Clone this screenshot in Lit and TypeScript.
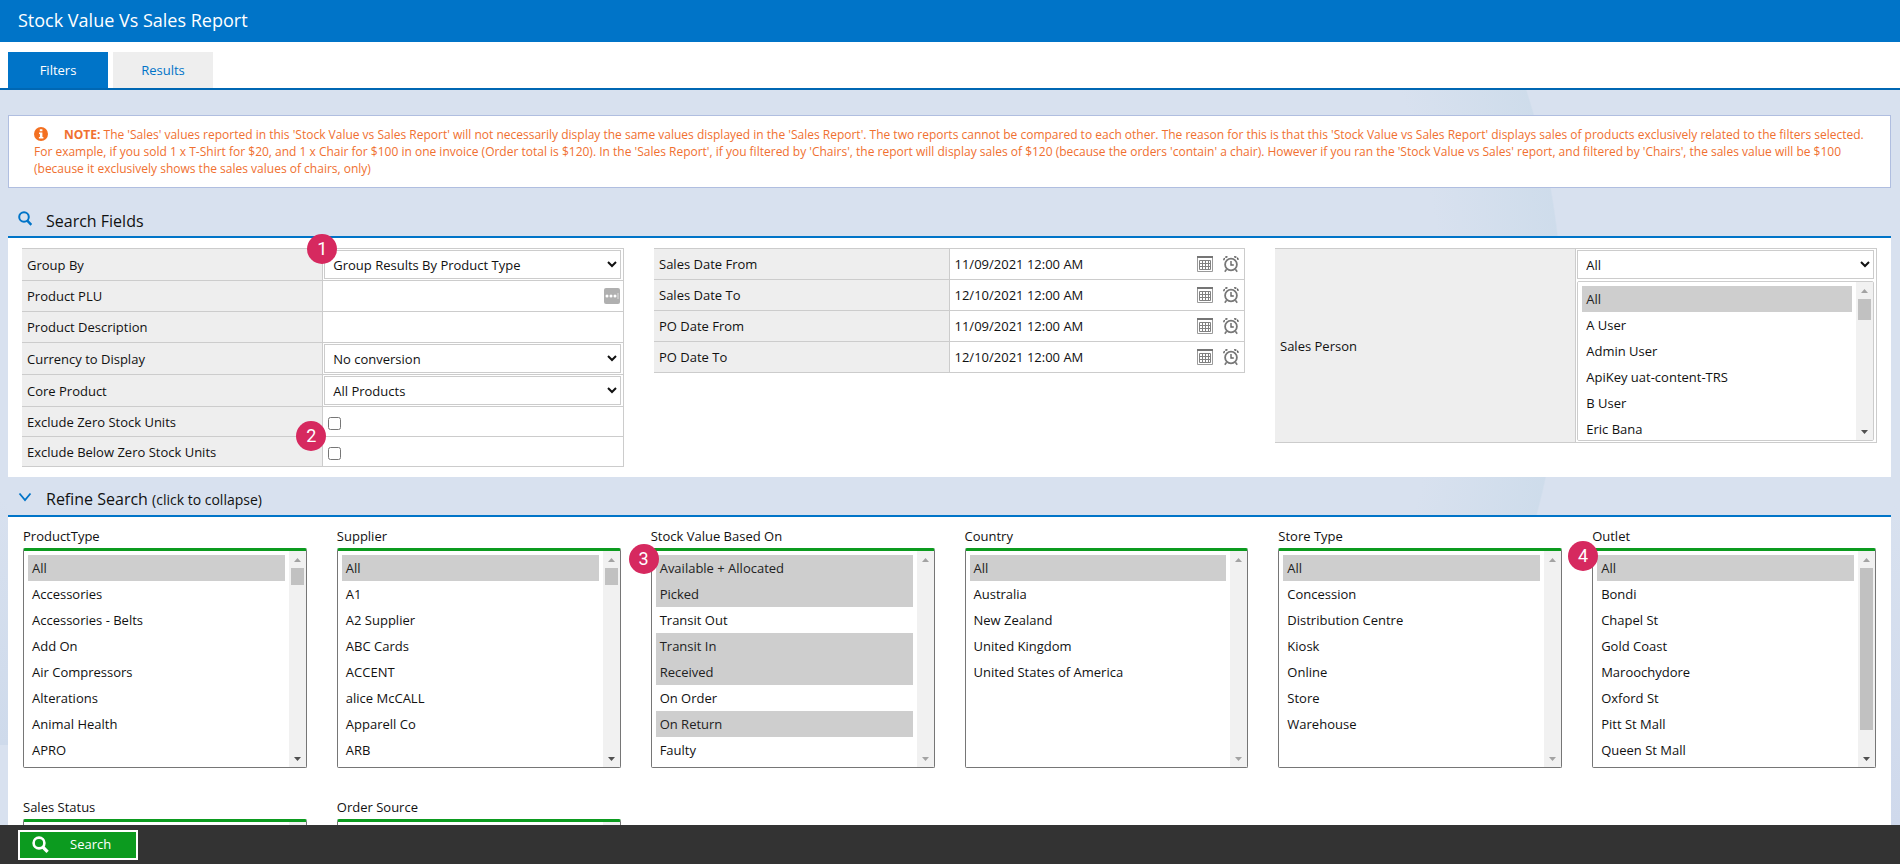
import { LitElement, html, css, svg } from "lit";
import { customElement, property } from "lit/decorators.js";

interface ListSpec {
  label: string;
  items: string[];
  selected?: number[];
  thumb?: number;
  badge?: string;
}

const LISTS: ListSpec[] = [
  { label: "ProductType", items: ["All", "Accessories", "Accessories - Belts", "Add On", "Air Compressors", "Alterations", "Animal Health", "APRO"], selected: [0], thumb: 17 },
  { label: "Supplier", items: ["All", "A1", "A2 Supplier", "ABC Cards", "ACCENT", "alice McCALL", "Apparell Co", "ARB"], selected: [0], thumb: 17 },
  { label: "Stock Value Based On", items: ["Available + Allocated", "Picked", "Transit Out", "Transit In", "Received", "On Order", "On Return", "Faulty"], selected: [0, 1, 3, 4, 6], badge: "3" },
  { label: "Country", items: ["All", "Australia", "New Zealand", "United Kingdom", "United States of America"], selected: [0] },
  { label: "Store Type", items: ["All", "Concession", "Distribution Centre", "Kiosk", "Online", "Store", "Warehouse"], selected: [0] },
  { label: "Outlet", items: ["All", "Bondi", "Chapel St", "Gold Coast", "Maroochydore", "Oxford St", "Pitt St Mall", "Queen St Mall"], selected: [0], thumb: 162, badge: "4" },
  { label: "Sales Status", items: [] },
  { label: "Order Source", items: [] },
];

const DATES: [string, string][] = [
  ["Sales Date From", "11/09/2021 12:00 AM"],
  ["Sales Date To", "12/10/2021 12:00 AM"],
  ["PO Date From", "11/09/2021 12:00 AM"],
  ["PO Date To", "12/10/2021 12:00 AM"],
];

const calendarIcon = svg`<svg width="16" height="16" viewBox="0 0 16 16" aria-hidden="true">
  <path d="M.5 1.500h15v14H.5z" fill="#fff" stroke="#9a9a9a"/>
  <path d="M0 0h16v2H0z" fill="#757575"/>
  <path d="M2.500 4.500h11v9h-11zM2.500 7.500h11M2.500 10.500h11M5.500 4.500v9M8.500 4.500v9M11.500 4.500v9" fill="none" stroke="#808080"/>
</svg>`;

const clockIcon = svg`<svg width="16" height="17" viewBox="0 0 16 17" aria-hidden="true">
  <circle cx="8" cy="8.500" r="5.900" fill="#fff" stroke="#777" stroke-width="1.800"/>
  <path d="M8 5v4h2.800" fill="none" stroke="#666" stroke-width="1.400"/>
  <path d="M.8 4.200C1 2 2.500.8 4.800.8M11.200.8C13.500.8 15 2 15.200 4.200" fill="none" stroke="#555" stroke-width="1.400" stroke-dasharray="2.200 1"/>
  <path d="M3.600 13.200l-1.800 2.600M12.400 13.200l1.800 2.600" stroke="#777" stroke-width="1.600"/>
</svg>`;

@customElement("filter-list")
export class FilterList extends LitElement {
  @property({ type: String }) label = "";
  @property({ attribute: false }) items: string[] = [];
  @property({ attribute: false }) selected: number[] = [];
  @property({ type: Number }) thumb = 0;
  @property({ type: Boolean, reflect: true }) plain = false;

  static styles = css`
    :host { display: block; font: 13px/18px "Open Sans", sans-serif; color: #111; }
    .caption { display: block; padding-bottom: 3px; }
    .box { display: flex; height: 220px; box-sizing: border-box; border: 1px solid #767676; border-top: 3px solid #0c9b1f; border-radius: 2px; background: #fff; overflow: hidden; }
    .list { flex: 1; min-width: 0; margin: 0; border: 0; padding: 4px; outline: 0; background: #fff; font: inherit; color: inherit; overflow-y: scroll; scrollbar-width: none; height: auto; border-radius: 0; }
    .list option { box-sizing: border-box; height: 26px; padding: 4px; }
    .list option:checked { background: linear-gradient(#cecece, #cecece); color: #222; }
    .bar { width: 17px; flex: none; display: flex; flex-direction: column; align-items: center; background: #f1f1f1; }
    .end { height: 17px; display: flex; align-items: center; }
    .track { flex: 1; }
    .thumb { width: 13px; background: #c1c1c1; }
    .arrow { fill: #a3a3a3; display: block; }
    .arrow.live { fill: #505050; }
    :host([plain]) .box { height: 160px; border: 1px solid #ccc; }
    :host([plain]) .caption { display: none; }
  `;

  render() {
    return html`
      <label class="caption" for="list">${this.label}</label>
      <div class="box">
        <select id="list" class="list" multiple size="4" aria-label=${this.label}>
          ${this.items.map((t, i) => html`<option ?selected=${this.selected.includes(i)}>${t}</option>`)}
        </select>
        <div class="bar" aria-hidden="true">
          <div class="end"><svg class="arrow" width="7" height="4"><path d="M3.500 0L7 4H0z" /></svg></div>
          <div class="track">${this.thumb ? html`<div class="thumb" style="height:${this.thumb}px"></div>` : null}</div>
          <div class="end"><svg class="arrow ${this.thumb ? "live" : ""}" width="7" height="4"><path d="M0 0h7L3.500 4z" /></svg></div>
        </div>
      </div>`;
  }
}

@customElement("app-root")
export class AppRoot extends LitElement {
  static styles = css`
    :host { display: flex; flex-direction: column; height: 100vh; overflow: hidden; font: 13px/18px "Open Sans", sans-serif; color: #111; background: #d8e1ef; }
    * { box-sizing: border-box; }
    h1, h2, p { margin: 0; font-weight: 400; }
    .top { flex: none; height: 42px; padding: 0 18px; background: #0074c8; color: #fff; display: flex; align-items: center; }
    .top h1 { font-size: 18px; line-height: 24px; padding-bottom: 2px; }
    .tabs { flex: none; display: flex; gap: 5px; padding: 10px 8px 0; background: #fff; border-bottom: 2px solid #0067b3; }
    .tab { width: 100px; height: 36px; border: 0; padding: 0; font: inherit; background: #eee; color: #0074c8; }
    .tab.on { background: #0074c8; color: #fff; }
    .scroll {
      flex: 1; min-height: 0; overflow: hidden; padding: 25px 9px 0 8px;
      background:
        radial-gradient(circle 755px at -192px 230px, rgba(204, 219, 234, 0) 84%, rgba(204, 219, 234, .8) 99.800%, rgba(204, 219, 234, 0) 100%) 1000px 0 / 900px 100% no-repeat,
        linear-gradient(rgba(204, 217, 234, 0), #cedaeb) 0 410px / 8px 245px no-repeat,
        linear-gradient(rgba(204, 217, 234, 0), #cfd9ec) 100% 100% / 9px 320px no-repeat;
    }
    .note { border: 1px solid #b0bee0; background: #fff; padding: 10px 25px; color: #f07030; font-size: 12px; line-height: 17px; }
    .note svg { display: inline-block; vertical-align: -2px; margin-right: 16px; }
    .head { display: flex; align-items: center; gap: 14px; height: 50px; padding: 17px 10px 0; border-bottom: 2px solid #0074c8; }
    .head.second { height: 40px; padding-top: 6px; }
    .head h2 { font-size: 16px; line-height: 24px; }
    .head small { font-size: 14px; }
    .head svg { flex: none; margin-bottom: 4px; }
    .panel { background: #fff; }
    .fields { display: grid; grid-template-columns: 602fr 591fr 602fr; gap: 30px; align-items: start; padding: 10px 14px; }
    .form { width: 100%; border-collapse: collapse; table-layout: fixed; }
    .form th, .form td { border: 1px solid #ccc; height: 31px; padding: 0 5px; text-align: left; font-weight: 400; }
    .form th { width: 50%; background: #eee; border-left: 0; }
    .form td { background: #fff; position: relative; padding: 1px; }
    .form .tall { height: 32px; }
    .form .low { height: 30px; }
    .pick { display: block; width: calc(100% - 1px); height: 29px; border: 1px solid #ccc; border-radius: 0; background: #fff; padding: 0 4px; font: inherit; color: inherit; outline: 0; }
    .text { display: block; flex: 1; width: 100%; min-width: 0; height: 26px; border: 0; padding: 0 4px; background: none; font: inherit; color: inherit; outline: 0; }
    .row { display: flex; align-items: center; gap: 10px; padding-right: 2px; }
    .form.dates th { width: 295px; }
    .dates .row { padding-right: 4px; }
    .icon { border: 0; padding: 0; background: none; display: block; flex: none; line-height: 0; }
    .more { width: 16px; height: 16px; border-radius: 2px; background: #b0b0b0; display: flex; align-items: center; justify-content: center; }
    .check { display: block; width: 13px; height: 13px; margin: 3px 4px 0; }
    .badge { position: absolute; z-index: 2; width: 30px; height: 30px; border-radius: 50%; background: #d6295f; color: #fff; font: 18px/30px Roboto, sans-serif; text-align: center; }
    .b1 { left: -16px; top: -15px; }
    .b2 { left: -27px; top: 14px; }
    .b3 { left: -7px; top: 17px; }
    .b4 { left: -9px; top: 14px; }
    .people { margin-top: 2px; padding-right: 1px; }
    .lists { display: grid; grid-template-columns: repeat(6, 1fr); row-gap: 30px; padding-top: 10px; }
    .cell { position: relative; padding: 0 15px; }
    .foot { flex: none; height: 39px; padding: 5px 18px; background: #333; }
    .go { width: 120px; height: 30px; border: 2px solid #fff; background: #0c9b1f; color: #fff; font: inherit; padding: 0 12px 2px; display: flex; align-items: center; gap: 21px; }
  `;

  private pick(id: string, label: string, value: string, badge = "") {
    return html`<tr>
      <th class="tall" scope="row"><label for=${id}>${label}</label></th>
      <td class="tall">
        <select id=${id} class="pick"><option>${value}</option></select>
        ${badge ? html`<span class="badge b1">${badge}</span>` : null}
      </td>
    </tr>`;
  }

  private tick(id: string, label: string, badge = "") {
    return html`<tr>
      <th class="low" scope="row"><label for=${id}>${label}</label></th>
      <td class="low">
        <input id=${id} class="check" type="checkbox" />
        ${badge ? html`<span class="badge b2">${badge}</span>` : null}
      </td>
    </tr>`;
  }

  render() {
    return html`
      <header class="top"><h1>Stock Value Vs Sales Report</h1></header>
      <nav class="tabs">
        <button class="tab on" type="button">Filters</button>
        <button class="tab" type="button">Results</button>
      </nav>
      <main class="scroll">
        <p class="note"><svg width="14" height="14" viewBox="0 0 14 14" aria-hidden="true"><circle cx="7" cy="7" r="7" fill="#f37021"/><path d="M5.800 2.200h2.600v2H5.800zM5 5.600h3.400v4.300h1v1.500H4.900V9.900h1V7.100H5z" fill="#fff"/></svg><b>NOTE:</b> The 'Sales' values reported in this 'Stock Value vs Sales Report' will not necessarily display the same values displayed in the 'Sales Report'. The two reports cannot be compared to each other. The reason for this is that this 'Stock Value vs Sales Report' displays sales of products exclusively related to the filters selected. For example, if you sold 1 x T-Shirt for $20, and 1 x Chair for $100 in one invoice (Order total is $120). In the 'Sales Report', if you filtered by 'Chairs', the report will display sales of $120 (because the orders 'contain' a chair). However if you ran the 'Stock Value vs Sales' report, and filtered by 'Chairs', the sales value will be $100 (because it exclusively shows the sales values of chairs, only)</p>

        <div class="head">
          <svg width="14" height="15" viewBox="0 0 14 15" aria-hidden="true"><circle cx="6" cy="6" r="4.800" fill="none" stroke="#0074c8" stroke-width="2"/><path d="M9.300 9.600l4 4.200" stroke="#0074c8" stroke-width="2.400"/></svg>
          <h2>Search Fields</h2>
        </div>
        <section class="panel fields">
          <table class="form">
            ${this.pick("group", "Group By", "Group Results By Product Type", "1")}
            <tr>
              <th scope="row"><label for="plu">Product PLU</label></th>
              <td><div class="row"><input id="plu" class="text" type="text" /><button class="icon more" type="button" aria-label="Browse"><svg width="14" height="6" viewBox="0 0 14 6"><circle cx="2" cy="3" r="1.500" fill="#fff"/><circle cx="6" cy="3" r="1.500" fill="#fff"/><circle cx="10" cy="3" r="1.500" fill="#fff"/><path d="M12.500 0h1v6h-1z" fill="#ddd"/></svg></button></div></td>
            </tr>
            <tr>
              <th scope="row"><label for="desc">Product Description</label></th>
              <td><input id="desc" class="text" type="text" /></td>
            </tr>
            ${this.pick("currency", "Currency to Display", "No conversion")}
            ${this.pick("core", "Core Product", "All Products")}
            ${this.tick("zero", "Exclude Zero Stock Units", "2")}
            ${this.tick("below", "Exclude Below Zero Stock Units")}
          </table>
          <table class="form dates">
            ${DATES.map(([label, value], i) => html`<tr>
              <th scope="row"><label for="date${i}">${label}</label></th>
              <td><div class="row">
                <input id="date${i}" class="text" type="text" .value=${value} />
                <button class="icon" type="button" aria-label="Pick date">${calendarIcon}</button>
                <button class="icon" type="button" aria-label="Pick time">${clockIcon}</button>
              </div></td>
            </tr>`)}
          </table>
          <table class="form">
            <tr>
              <th scope="row"><label for="person">Sales Person</label></th>
              <td>
                <select id="person" class="pick"><option>All</option></select>
                <filter-list class="people" plain label="Sales Person" .items=${["All", "A User", "Admin User", "ApiKey uat-content-TRS", "B User", "Eric Bana"]} .selected=${[0]} .thumb=${21}></filter-list>
              </td>
            </tr>
          </table>
        </section>

        <div class="head second">
          <svg width="14" height="10" viewBox="0 0 14 10" aria-hidden="true"><path d="M1.500 1.500L7 8l5.500-6.500" fill="none" stroke="#0074c8" stroke-width="1.800"/></svg>
          <h2>Refine Search <small>(click to collapse)</small></h2>
        </div>
        <section class="panel lists">
          ${LISTS.map((l) => html`<div class="cell">
            <filter-list label=${l.label} .items=${l.items} .selected=${l.selected ?? []} .thumb=${l.thumb ?? 0}></filter-list>
            ${l.badge ? html`<span class="badge b${l.badge}">${l.badge}</span>` : null}
          </div>`)}
        </section>
      </main>
      <footer class="foot">
        <button class="go" type="button">
          <svg width="17" height="17" viewBox="0 0 17 17" aria-hidden="true"><circle cx="7" cy="7" r="5.400" fill="none" stroke="#fff" stroke-width="2.600"/><path d="M10.800 11l4.800 4.800" stroke="#fff" stroke-width="3.200"/></svg>
          Search
        </button>
      </footer>`;
  }
}
